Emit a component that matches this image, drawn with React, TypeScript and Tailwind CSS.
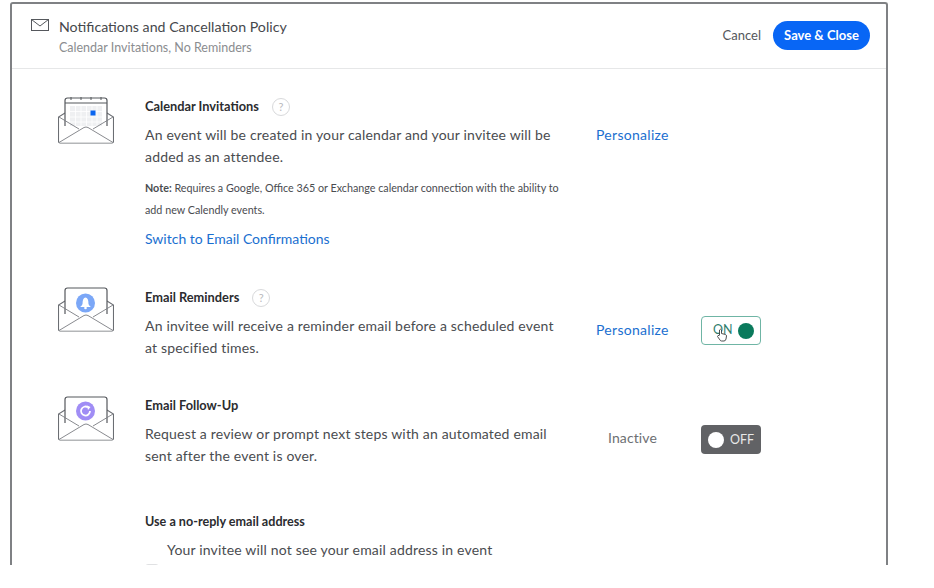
import React from 'react';

const Envelope: React.FC<{ paperTop: number; children?: React.ReactNode }> = ({ paperTop, children }) => (
  <svg width="56" height={48 - paperTop + 1} viewBox={`0 ${paperTop - 1} 56 ${48 - paperTop + 1}`} fill="none" className="block">
    <path d="M7 17 L0.500 21 V45.500 Q0.500 47 2 47 H54 Q55.500 47 55.500 45.500 V21 L49 17" fill="#fff" stroke="#6b6e73" strokeWidth="1.1" />
    <path d={`M7 30 V${paperTop + 2.5} Q7 ${paperTop} 9.500 ${paperTop} H46.500 Q49 ${paperTop} 49 ${paperTop + 2.5} V30`} fill="#fff" stroke="#55585d" strokeWidth="1.2" />
    {children}
    <path d="M1 21 L21 33 M55 21 L35 33" stroke="#7a7d82" strokeWidth="0.9" />
    <path d="M1 46.500 L26 31.500 Q28 30.500 30 31.500 L55 46.500" fill="#fff" stroke="#7a7d82" strokeWidth="0.9" />
  </svg>
);

const CalendarIcon = () => (
  <Envelope paperTop={2}>
    <path d="M7 7 H49" stroke="#55585d" strokeWidth="1.1" />
    <path d="M13 0 V4 M23 0 V4 M33 0 V4 M43 0 V4" stroke="#55585d" strokeWidth="1" />
    <rect x="12" y="10" width="32" height="20" fill="#eff0f2" />
    <path d="M17.500 10 V30 M23 10 V30 M28.500 10 V30 M34 10 V30 M39 10 V30 M12 15.500 H44 M12 21 H44 M12 26 H44" stroke="#fff" strokeWidth="0.8" />
    <rect x="32.500" y="14.500" width="5" height="5" fill="#0b66f0" />
  </Envelope>
);

const BellIcon = () => (
  <Envelope paperTop={4}>
    <circle cx="27.500" cy="19" r="9.500" fill="#7ba7f7" />
    <path d="M24.500 20 Q24.500 13.500 27.500 13.500 Q30.500 13.500 30.500 20 Q31 21.500 32.500 22.500 V23 H22.500 V22.500 Q24 21.500 24.500 20 Z" fill="#fff" />
    <circle cx="27.500" cy="24" r="1.300" fill="#fff" />
  </Envelope>
);

const FollowUpIcon = () => (
  <Envelope paperTop={4}>
    <circle cx="27.500" cy="18" r="9.500" fill="#a08df5" />
    <path d="M32 18 A4.500 4.500 0 1 1 30 14.300" stroke="#fff" strokeWidth="1.8" />
    <path d="M29 12.500 L32.500 14 L30 17 Z" fill="#fff" />
  </Envelope>
);

const HelpBadge = () => (
  <span className="ml-[13px] flex h-[18px] w-[18px] items-center justify-center rounded-full border border-[#d8d9db] text-[11px] text-[#b9babd]">
    ?
  </span>
);

const Row: React.FC<{
  icon: React.ReactNode;
  iconClass: string;
  title: string;
  help?: boolean;
  side?: React.ReactNode;
  children: React.ReactNode;
  className: string;
}> = ({ icon, iconClass, title, help, side, children, className }) => (
  <section className={`flex ${className}`}>
    <div className={`w-[89px] pl-[2px] ${iconClass}`}>{icon}</div>
    <div className="w-[451px]">
      <div className="flex h-[18px] items-center">
        <h3 className="text-[12.800px] font-bold text-[#2b2c2f]">{title}</h3>
        {help && <HelpBadge />}
      </div>
      {children}
    </div>
    {side}
  </section>
);

export default function App() {
  return (
    <div className="h-[588px] w-[934px] overflow-hidden bg-white pl-[10px] pt-[2px] font-['Lato','Open_Sans',sans-serif] text-[#4a4c50]">
      <div className="h-[563px] w-[878px] overflow-hidden rounded-t-[3px] border-x-2 border-t-2 border-[#7f8184]">
        {/* Header */}
        <header className="flex h-[65px] items-start border-b border-[#e6e7e8] pl-[19px]">
          <svg width="18" height="12" viewBox="0 0 18 12" fill="none" className="mt-[15px]">
            <rect x="0.500" y="0.500" width="17" height="11" stroke="#55585d" />
            <path d="M0.500 0.500 L9 7 L17.500 0.500" stroke="#55585d" />
          </svg>
          <div className="ml-[10px] mt-[13px]">
            <div className="text-[14.200px] leading-[20px] text-[#46484c]">Notifications and Cancellation Policy</div>
            <div className="mt-[2px] text-[12.500px] leading-[18px] text-[#8b8d90]">Calendar Invitations, No Reminders</div>
          </div>
          <div className="ml-auto mr-[16px] mt-[17px] flex items-center">
            <span className="text-[13px] text-[#55575b]">Cancel</span>
            <button className="ml-[12px] h-[29px] w-[97px] rounded-full bg-[#0866f5] text-[13px] font-bold text-white">Save &amp; Close</button>
          </div>
        </header>

        <div className="pl-[44px]">
          <Row
            icon={<CalendarIcon />}
            iconClass="-mt-[1px]"
            title="Calendar Invitations"
            help
            className="pt-[29px]"
            side={<a className="mt-[26px] text-[14px] leading-[22px] tracking-[0.3px] text-[#1a6fd0]">Personalize</a>}
          >
            <p className="mt-[8px] w-[420px] text-[14px] leading-[22px] tracking-[0.18px]">
              An event will be created in your calendar and your invitee will be added as an attendee.
            </p>
            <p className="mt-[9px] w-[420px] text-[10.750px] leading-[22px] text-[#4a4c50]">
              <b>Note:</b> Requires a Google, Office 365 or Exchange calendar connection with the ability to add new Calendly events.
            </p>
            <a className="mt-[7px] block text-[14px] leading-[22px] text-[#1a6fd0]">Switch to Email Confirmations</a>
          </Row>

          <Row
            icon={<BellIcon />}
            iconClass="-mt-[2px]"
            title="Email Reminders"
            help
            className="pt-[39px]"
            side={
              <div className="mt-[27px] flex items-start">
                <a className="mt-[3px] w-[105px] text-[14px] leading-[22px] tracking-[0.3px] text-[#1a6fd0]">Personalize</a>
                <div className="relative flex h-[29px] w-[60px] items-center rounded-[4px] border border-[#6fb5a5] pl-[11px]">
                  <span className="text-[12.500px] text-[#2f7d6d]">ON</span>
                  <span className="ml-auto mr-[6px] h-[16px] w-[16px] rounded-full bg-[#0a7a5c]" />
                  <svg width="12" height="14" viewBox="0 0 12 14" className="absolute left-[14px] top-[11px]">
                    <path d="M3.500 7 V2 Q4.500 0.500 5.500 2 V5.500 L9.500 6.500 Q10.500 7 10.500 8 L10 11 Q9.500 13 8 13 H5.500 Q4.500 13 4 12 L1.500 8.500 Q1.500 7 3.500 7.500" fill="#fff" stroke="#3b3d40" strokeWidth="0.9" />
                  </svg>
                </div>
              </div>
            }
          >
            <p className="mt-[8px] w-[420px] text-[14px] leading-[22px] tracking-[0.18px]">
              An invitee will receive a reminder email before a scheduled event at specified times.
            </p>
          </Row>

          <Row
            icon={<FollowUpIcon />}
            iconClass="-mt-[1px]"
            title="Email Follow-Up"
            className="pt-[38px]"
            side={
              <div className="mt-[28px] flex items-start">
                <span className="ml-[12px] mt-[2px] w-[93px] text-[14px] leading-[22px] tracking-[0.1px] text-[#6d6f73]">Inactive</span>
                <div className="flex h-[29px] w-[60px] items-center gap-[6px] rounded-[4px] bg-[#616265] pl-[7px]">
                  <span className="h-[16px] w-[16px] rounded-full bg-white" />
                  <span className="mt-[2px] text-[12.500px] text-[#e8e8e8]">OFF</span>
                </div>
              </div>
            }
          >
            <p className="mt-[8px] w-[420px] text-[14px] leading-[22px] tracking-[0.18px]">
              Request a review or prompt next steps with an automated email sent after the event is over.
            </p>
          </Row>

          <div className="pl-[89px] pt-[46px]">
            <h3 className="text-[12.600px] font-bold leading-[18px] text-[#2b2c2f]">Use a no-reply email address</h3>
            <div className="mt-[8px] flex">
              <span className="mt-[25px] h-[20px] w-[14px] shrink-0 rounded-[3px] border border-[#e0e1e3]" />
              <p className="ml-[8px] w-[360px] text-[14px] leading-[22px] tracking-[0.18px]">Your invitee will not see your email address in event</p>
            </div>
          </div>
        </div>
      </div>
    </div>
  );
}
